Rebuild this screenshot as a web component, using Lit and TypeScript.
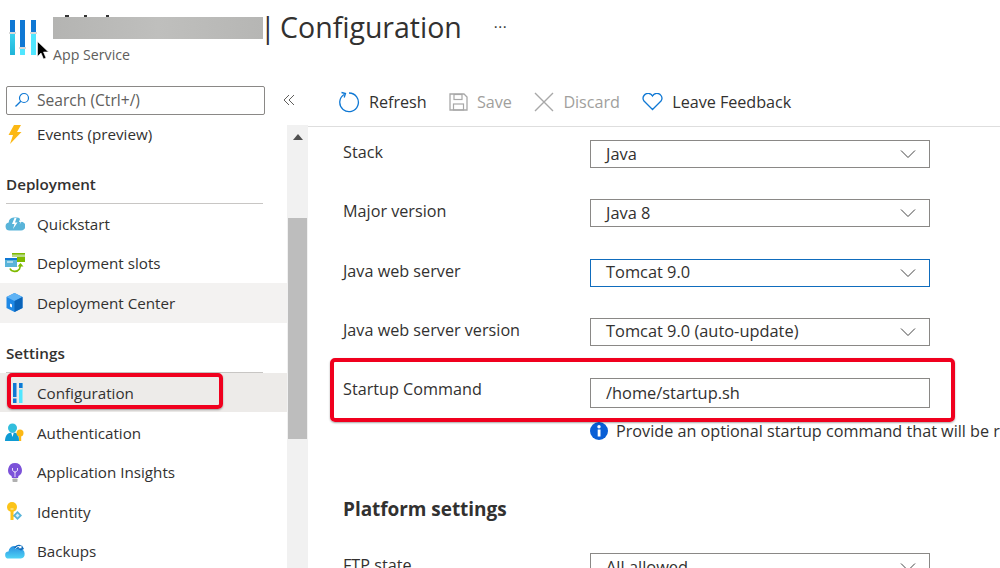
import { LitElement, html, css } from "lit";
import { customElement } from "lit/decorators.js";

const chev = html`<svg class="chev" width="16" height="10" viewBox="0 0 16 10"><path d="M1 1.500l7 7 7-7" fill="none" stroke="#444" stroke-width="1"/></svg>`;

const sliders = (w: number, h: number) => html`<svg width="${w}" height="${h}" viewBox="0 0 30 36">
  <defs><linearGradient id="lb" x1="0" y1="0" x2="0" y2="1"><stop offset="0" stop-color="#50e6ff"/><stop offset="1" stop-color="#1fb4d8"/></linearGradient></defs>
  <rect x="1" y="1" width="5" height="35" fill="url(#lb)" rx=".5"/><rect x="1" y="1" width="5" height="12" fill="#0f78d4"/><rect x="0" y="13" width="7" height="2" fill="#d9d9d9"/>
  <rect x="11" y="1" width="5" height="35" fill="#50e6ff" rx=".5"/><rect x="11" y="1" width="5" height="27" fill="#0f78d4"/><rect x="10" y="28" width="7" height="2" fill="#d9d9d9"/>
  <rect x="22" y="1" width="5" height="35" fill="#50e6ff" rx=".5"/><rect x="22" y="1" width="5" height="12" fill="#0f78d4"/><rect x="21" y="13" width="7" height="2" fill="#d9d9d9"/>
</svg>`;

const icons: Record<string, unknown> = {
  bolt: html`<svg width="14" height="19" viewBox="0 0 14 19"><path d="M6 0h7L9 7h4.500L2 19l3-9H.5z" fill="#fcb814"/></svg>`,
  cloud: html`<svg width="20" height="15" viewBox="0 0 20 15"><path d="M4.500 14.500a4 4 0 0 1-.8-7.900A5 5 0 0 1 8.500 1.500h3.500a4 4 0 0 1 4 4.200 4.400 4.400 0 0 1 0 8.800z" fill="#59b4d9"/><path d="M9.500 2L7 8h2.500L8 13l4.500-6.500h-2.500L11.500 2z" fill="#fff"/><path d="M15 3l-1 3h1.500l-1 2.500 2.500-3.500h-1.300l.6-2z" fill="#fff"/></svg>`,
  slots: html`<svg width="20" height="20" viewBox="0 0 20 20"><rect x="7" y="0" width="13" height="9" fill="#7fba00"/><rect x="7" y="1.500" width="13" height="2.500" fill="#b8d988"/><rect x="0" y="4" width="12" height="10" fill="#fff"/><rect x="0" y="5" width="12" height="9" fill="#59b4d9"/><rect x="0" y="5" width="12" height="2" fill="#0f78d4"/><rect x="2" y="8.500" width="6" height="1" fill="#fff"/><path d="M5 15.500c1.500 3.500 7 4 9.500.5l1-3.500" fill="none" stroke="#7fba00" stroke-width="1.600"/><path d="M12.500 13.500h6l-3-3.500z" fill="#7fba00"/></svg>`,
  box: html`<svg width="17" height="19" viewBox="0 0 17 19"><path d="M8.500 0l8 4v11l-8 4-8-4V4z" fill="#1e88e5"/><path d="M8.500 0l8 4-8 4-8-4z" fill="#5fb3f5"/><path d="M8.500 8l8-4v11l-8 4z" fill="#0a63b8"/><path d="M4 10.500l2 1v3l-2-1z" fill="#fff"/></svg>`,
  sliders: html`<svg class="cfg" width="10" height="20" viewBox="0 0 10 20"><rect x="0" y="0" width="3.500" height="14" fill="#0f78d4"/><rect x="0" y="14" width="3.500" height="1.500" fill="#e4e4e4"/><rect x="0" y="15.500" width="3.500" height="4.500" fill="#0f78d4"/><rect x="6" y="0" width="3.500" height="20" fill="#50e6ff"/><rect x="6" y="0" width="3.500" height="5" fill="#0f78d4"/><rect x="6" y="5" width="3.500" height="1.500" fill="#e4e4e4"/></svg>`,
  auth: html`<svg width="19" height="19" viewBox="0 0 19 19"><circle cx="7.500" cy="5" r="4.500" fill="#32bedd"/><path d="M0 18c0-6 3-8.500 7.500-8.500S14 11 14 18z" fill="#0f9bd4"/><path d="M6.300 10h2.400L7.500 14z" fill="#fff"/><circle cx="15" cy="10" r="3.500" fill="#fcb814"/><rect x="14" y="11" width="2.200" height="7" fill="#fcb814"/></svg>`,
  bulb: html`<svg width="14" height="19" viewBox="0 0 14 19"><path d="M7 0a7 7 0 0 0-3.500 13l.5 2h6l.5-2A7 7 0 0 0 7 0z" fill="#7c52d9"/><path d="M4.500 5v2.500l2.500 2 2.500-2V5M7 8v6" fill="none" stroke="#e6dcf8" stroke-width="1"/><rect x="4.500" y="15.500" width="5" height="3.500" rx=".8" fill="#b0b0b0"/></svg>`,
  key: html`<svg width="15" height="19" viewBox="0 0 15 19"><circle cx="5" cy="5" r="5" fill="#fcc419"/><rect x="3.500" y="8" width="3" height="10" fill="#fcc419"/><rect x="6" y="13" width="2.500" height="1.700" fill="#fcc419"/><rect x="3.500" y="6.500" width="3" height="1" fill="#fff3c4"/><path d="M10.500 9l4.500 4.500-4.500 4.500-4.500-4.500z" fill="#59b4d9"/><path d="M10.500 11.500l2 2-2 2-2-2z" fill="#d5effa"/></svg>`,
  backup: html`<svg width="20" height="16" viewBox="0 0 20 16"><defs><linearGradient id="bk" x1="0" y1="0" x2="0" y2="1"><stop offset="0" stop-color="#2a8fe0"/><stop offset="1" stop-color="#4fd3f5"/></linearGradient></defs><path d="M3.800 15.500a3.500 3.500 0 0 1-.3-7A6.500 6.500 0 0 1 9 3c2.800 0 5 1 6 3a4.800 4.800 0 0 1 .8 9.500z" fill="url(#bk)"/><path d="M9 5c2-3.500 5-4 8-2.500L19 6l-3 1.500-4-2z" fill="#0f6cbd"/><path d="M10.500 5.500c1.500-2 3-2.500 5-1.500" fill="none" stroke="#fff" stroke-width="1"/><path d="M16.500 1.800v3.400h-3.200z" fill="#fff"/></svg>`,
};

const nav = (icon: string, label: string, cls = "") =>
  html`<div class="item ${cls}"><span class="ico">${icons[icon]}</span><span>${label}</span></div>`;

const select = (value: string, focused = false) =>
  html`<div class="ctl ${focused ? "focus" : ""}"><span>${value}</span>${chev}</div>`;

const row = (label: string, control: unknown) =>
  html`<div class="row"><label>${label}</label>${control}</div>`;

@customElement("app-root")
export class AppRoot extends LitElement {
  static styles = css`
    :host {
      display: block; position: relative; width: 1000px; height: 568px; overflow: hidden; background: #fff;
      font-family: "Open Sans", "Noto Sans", sans-serif; font-size: 15.200px; color: #323130;
    }
    svg { flex: none; display: block; }
    header { display: flex; height: 84px; box-sizing: border-box; padding: 14px 0 0 9px; }
    .logo { margin-top: 5px; width: 44px; flex: none; }
    .titles { display: flex; flex-direction: column; }
    .tline { display: flex; align-items: center; height: 26px; }
    .blur { position: relative; width: 210px; height: 22px; margin-top: 2px; flex: none; background: linear-gradient(90deg,#b4b4b2,#bfbfbd 50%,#b6b6b4); }
    .blur::before {
      content: ""; position: absolute; left: 12px; top: -2px; width: 44px; height: 2px;
      background:
        linear-gradient(#333,#333) 0 0 / 4px 2px no-repeat,
        linear-gradient(#333,#333) 19px 0 / 3px 2px no-repeat,
        linear-gradient(#333,#333) 41px 0 / 3px 2px no-repeat;
    }
    h1 { margin: 0 0 0 -3px; font-weight: 400; font-size: 28.500px; word-spacing: -3px; color: #323130; white-space: nowrap; line-height: 26px; }
    .dots { margin-left: 32px; font-size: 15px; letter-spacing: .5px; margin-top: -2px; }
    .sub { font-size: 14.200px; color: #605e5c; margin-top: 6px; line-height: 18px; }
    .body { display: flex; height: 484px; }
    aside { width: 287px; flex: none; }
    .searchrow { display: flex; align-items: center; padding-left: 6px; height: 32px; }
    .search { width: 259px; flex: none; height: 29px; box-sizing: border-box; border: 1px solid #8a8886; border-radius: 2px; display: flex; align-items: center; gap: 7px; padding-left: 7px; color: #605e5c; font-size: 15.600px; }
    .collapse { margin-left: 18px; display: flex; flex: none; }
    .item { height: 39.600px; display: flex; align-items: center; box-sizing: border-box; }
    .ico { width: 37px; flex: none; display: flex; justify-content: center; box-sizing: border-box; padding: 0 12px 0 4px; }
    .cfg { margin-left: 6px; }
    .first { height: 38px; padding-bottom: 2px; }
    .hover { background: #f3f2f1; }
    .sel { background: #edebe9; }
    .low .item { padding-top: 1px; }
    .head { font-weight: 600; font-size: 15.200px; margin: 18px 0 0 6px; width: 257px; height: 32px; border-bottom: 1px solid #c8c6c4; box-sizing: border-box; line-height: 24px; }
    .bar { width: 21px; flex: none; background: #f1f1f1; position: relative; box-sizing: border-box; margin-top: 41px; }
    .up { height: 24px; display: flex; align-items: center; justify-content: center; }
    .thumb { position: absolute; left: 1px; width: 19px; top: 93px; height: 221px; background: #bdbdbd; }
    main { flex: 1; min-width: 0; }
    .tools { height: 43px; box-sizing: border-box; border-bottom: 1px solid #dedede; display: flex; align-items: center; padding: 0 0 6px 30px; font-size: 16.200px; letter-spacing: -0.05px; }
    .tool { display: flex; align-items: center; gap: 9px; margin-right: 22.500px; }
    .tool.off { color: #a19f9d; }
    .form { padding: 13px 0 0 35px; }
    .row { display: flex; height: 59.300px; box-sizing: border-box; }
    label { width: 247px; flex: none; font-size: 16.200px; line-height: 24px; }
    .ctl { width: 340px; flex: none; height: 28px; box-sizing: border-box; border: 1px solid #8a8886; display: flex; align-items: center; justify-content: space-between; padding: 0 13px 2px 15px; font-size: 16.400px; white-space: nowrap; }
    .chev { margin-top: 2px; }
    .ctl.focus { border-color: #0f6cbd; }
    .ctl.tall { height: 30px; margin-top: 1px; }
    .startup { height: 42px; }
    .note { display: flex; align-items: center; gap: 8px; margin-left: 247px; white-space: nowrap; font-size: 16.200px; height: 24px; }
    h2 { font-size: 19px; font-weight: 700; margin: 53px 0 0; line-height: 26px; color: #323130; letter-spacing: -0.05px; }
    .ftp { margin-top: 31px; }
    .mark { position: absolute; border: 4px solid #f0001e; border-radius: 5px; box-sizing: border-box; box-shadow: 0 1px 2px rgba(0,0,0,.35); }
    .m1 { left: 7px; top: 373px; width: 216px; height: 36px; }
    .m2 { left: 330px; top: 358px; width: 625px; height: 64px; }
    .cursor { position: absolute; left: 37px; top: 41px; }
  `;

  render() {
    return html`
      <header>
        <div class="logo">${sliders(30, 36)}</div>
        <div class="titles">
          <div class="tline"><div class="blur"></div><h1>| Configuration</h1><span class="dots">···</span></div>
          <div class="sub">App Service</div>
        </div>
      </header>
      <div class="body">
        <aside>
          <div class="searchrow">
            <div class="search">
              <svg width="16" height="16" viewBox="0 0 16 16"><circle cx="10" cy="6" r="4.500" fill="none" stroke="#0f78d4" stroke-width="1.200"/><path d="M6.800 9.200L1.500 14.500" stroke="#0f78d4" stroke-width="1.300"/></svg>
              <span>Search (Ctrl+/)</span>
            </div>
            <span class="collapse"><svg width="12" height="12" viewBox="0 0 12 12"><path d="M6 1L1 6l5 5M11 1L6 6l5 5" fill="none" stroke="#605e5c" stroke-width="1"/></svg></span>
          </div>
          ${nav("bolt", "Events (preview)", "first")}
          <div class="head">Deployment</div>
          ${nav("cloud", "Quickstart")}
          ${nav("slots", "Deployment slots")}
          ${nav("box", "Deployment Center", "hover")}
          <div class="head">Settings</div>
          <div class="low">
            ${nav("sliders", "Configuration", "sel")}
            ${nav("auth", "Authentication")}
            ${nav("bulb", "Application Insights")}
            ${nav("key", "Identity")}
            ${nav("backup", "Backups")}
          </div>
        </aside>
        <div class="bar">
          <div class="up"><svg width="10" height="6" viewBox="0 0 10 6"><path d="M5 0l5 6H0z" fill="#505050"/></svg></div>
          <div class="thumb"></div>
        </div>
        <main>
          <div class="tools">
            <div class="tool"><svg width="22" height="22" viewBox="0 0 22 22"><path d="M6.500 3.200a9.300 9.300 0 1 0 4.500-1.200" fill="none" stroke="#0f78d4" stroke-width="1.300"/><path d="M3.500 1.500l4 1 -1.300 4" fill="none" stroke="#0f78d4" stroke-width="1.300"/></svg><span>Refresh</span></div>
            <div class="tool off"><svg width="19" height="18" viewBox="0 0 19 18"><path d="M1 1h14l3 3v13H1z" fill="none" stroke="#a8a8a8" stroke-width="1.300"/><rect x="5" y="1.500" width="8" height="5" fill="none" stroke="#a8a8a8" stroke-width="1.200"/><rect x="4.500" y="11" width="10" height="6" fill="none" stroke="#a8a8a8" stroke-width="1.200"/></svg><span>Save</span></div>
            <div class="tool off"><svg width="20" height="20" viewBox="0 0 20 20"><path d="M1 1l18 18M19 1L1 19" stroke="#a8a8a8" stroke-width="1.400"/></svg><span>Discard</span></div>
            <div class="tool"><svg width="21" height="18" viewBox="0 0 21 18"><path d="M10.500 16.500L2 8a4.700 4.700 0 0 1 0-5.500A5 5 0 0 1 10.500 3 5 5 0 0 1 19 2.500 4.700 4.700 0 0 1 19 8z" fill="none" stroke="#0f78d4" stroke-width="1.300"/></svg><span>Leave Feedback</span></div>
          </div>
          <div class="form">
            ${row("Stack", select("Java"))}
            ${row("Major version", select("Java 8"))}
            ${row("Java web server", select("Tomcat 9.0", true))}
            ${row("Java web server version", select("Tomcat 9.0 (auto-update)"))}
            <div class="row startup"><label>Startup Command</label><div class="ctl tall"><span>/home/startup.sh</span></div></div>
            <div class="note"><svg width="18" height="18" viewBox="0 0 18 18"><circle cx="9" cy="9" r="9" fill="#0a5fd6"/><rect x="7.700" y="7.500" width="2.800" height="7" fill="#fff"/><circle cx="9" cy="4.800" r="1.700" fill="#fff"/></svg><span>Provide an optional startup command that will be run as part of the container startup.</span></div>
            <h2>Platform settings</h2>
            <div class="row ftp"><label>FTP state</label>${select("All allowed")}</div>
          </div>
        </main>
      </div>
      <div class="mark m1"></div>
      <div class="mark m2"></div>
      <svg class="cursor" width="14" height="20" viewBox="0 0 14 20"><path d="M0.500 0.500v15l3.500-3.500 2.500 6 2.500-1-2.500-6h5z" fill="#000" stroke="#fff" stroke-width=".6"/></svg>
    `;
  }
}
